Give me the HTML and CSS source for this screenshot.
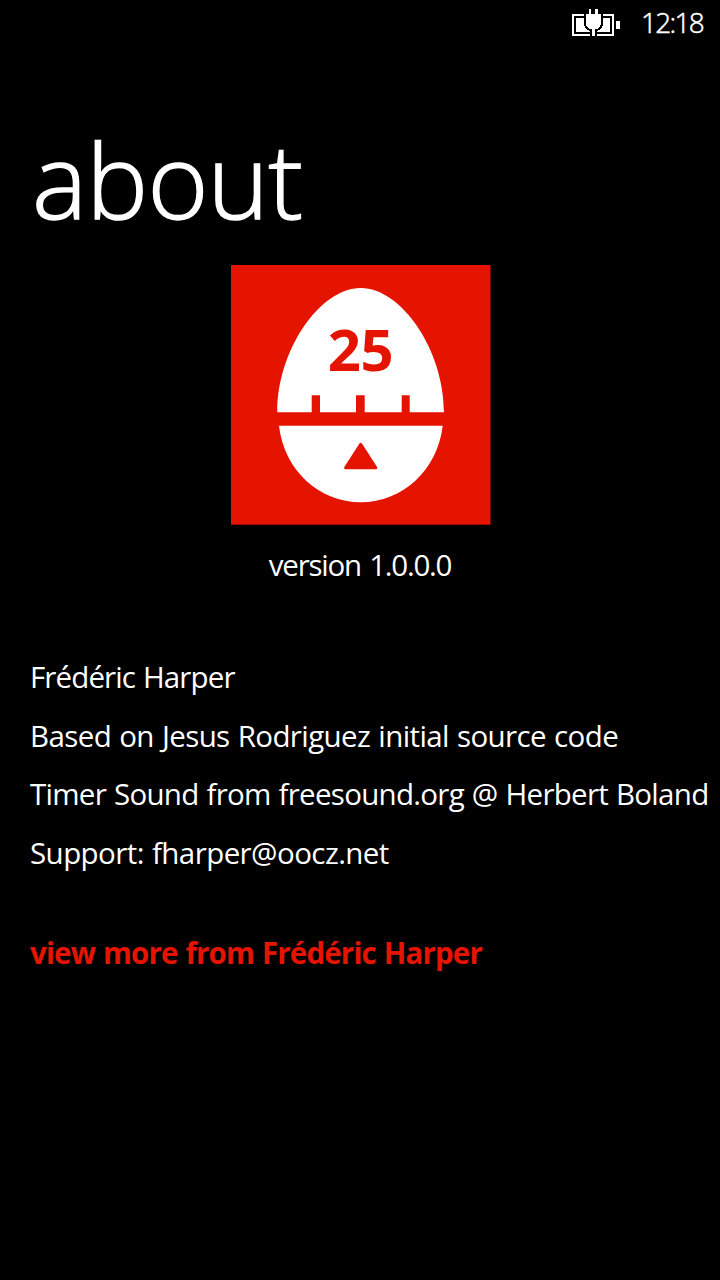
FILE: index.html
```html
<!DOCTYPE html>
<html lang="en">
<head>
<meta charset="utf-8">
<title>about</title>
<link rel="stylesheet" href="styles.css">
</head>
<body>
<div class="phone">
  <header class="status">
    <svg class="battery" width="48" height="28" viewBox="0 0 48 28" shape-rendering="crispEdges">
      <path fill="#fff" fill-rule="evenodd" d="M0 5H42V27H0ZM2 7V25H40V7Z"/>
      <path fill="#fff" d="M4 9H38V23H4ZM44 12H48V20H44Z"/>
      <path fill="#000" d="M12 5H31V16L29 20L25 22V27H18V22L14 20L12 16Z"/>
      <path fill="#fff" d="M17 0H19V5H23V0H26V5H29V15L28 18L25 20H23V27H20V20H18L15 18L14 15V5H17Z"/>
    </svg>
    <span class="clock">12:18</span>
  </header>
  <main class="page">
    <h1 class="title">about</h1>
    <svg class="logo" width="260" height="260" viewBox="0 0 260 260">
      <rect width="259.5" height="259.7" fill="#e51400"/>
      <path fill="#fff" d="M46.3 147.3C46.3 85 89 23 129.7 23S213 85 213 147.3H178.7V130.3H170.7V147.3H133.7V130.3H125V147.3H89V130.3H80.7V147.3Z"/>
      <path fill="#fff" d="M48 160.7H211.7C206.5 205 171.4 237.3 129.7 237.3S53 205 48 160.7Z"/>
      <path fill="#e51400" stroke="#e51400" stroke-width="3" stroke-linejoin="round" d="M129.7 179.4L144.8 202.8H114.6Z"/>
      <text class="minutes" x="129.5" y="105.6" text-anchor="middle">25</text>
    </svg>
    <p class="version">version 1.0.0.0</p>
    <div class="credits">
      <p class="author">Frédéric Harper</p>
      <p class="source">Based on Jesus Rodriguez initial source code</p>
      <p class="sound">Timer Sound from freesound.org @ Herbert Boland</p>
      <p class="support">Support: fharper@oocz.net</p>
    </div>
    <a class="more">view more from Frédéric Harper</a>
  </main>
</div>
</body>
</html>
```
FILE: styles.css
```css
* { box-sizing: border-box; margin: 0; padding: 0; }
body { background: #000; color: #fff; font-family: "Open Sans", "Noto Sans", sans-serif; font-size: 29.5px; }
.phone { width: 720px; height: 1280px; overflow: hidden; background: #000; }
.status { height: 46px; display: flex; justify-content: flex-end; align-items: flex-start; padding: 9px 0 0; gap: 21px; }
.battery { display: block; }
.clock { width: 79px; font-size: 28px; line-height: 27px; letter-spacing: -1.7px; font-weight: 300; -webkit-text-stroke: 0.5px #fff; }
.page { display: flex; flex-direction: column; }
.title { height: 159px; margin-top: 60px; padding-left: 32px; font-size: 104px; line-height: 146px; font-weight: 300; letter-spacing: -0.8px; -webkit-text-stroke: 1.4px #fff; white-space: nowrap; }
.logo { display: block; margin-left: 231px; }
.minutes { font-family: "Open Sans", sans-serif; font-weight: 700; font-size: 58px; letter-spacing: -0.5px; fill: #e51400; }
.version { margin-top: 20px; height: 40px; line-height: 40px; text-align: center; letter-spacing: -1.25px; word-spacing: 2px; }
.credits { margin-top: 63px; padding-left: 30px; white-space: nowrap; }
.credits p { height: 58.6px; line-height: 58.6px; }
.author { letter-spacing: -0.87px; word-spacing: 1px; }
.source { letter-spacing: -0.6px; word-spacing: 1px; }
.sound { letter-spacing: -0.72px; word-spacing: 1px; }
.support { letter-spacing: -0.57px; word-spacing: 1px; }
.more { margin-top: 41px; padding-left: 30px; height: 59px; line-height: 59px; font-weight: 700; letter-spacing: -0.84px; word-spacing: 1px; color: #e51400; white-space: nowrap; }
```
